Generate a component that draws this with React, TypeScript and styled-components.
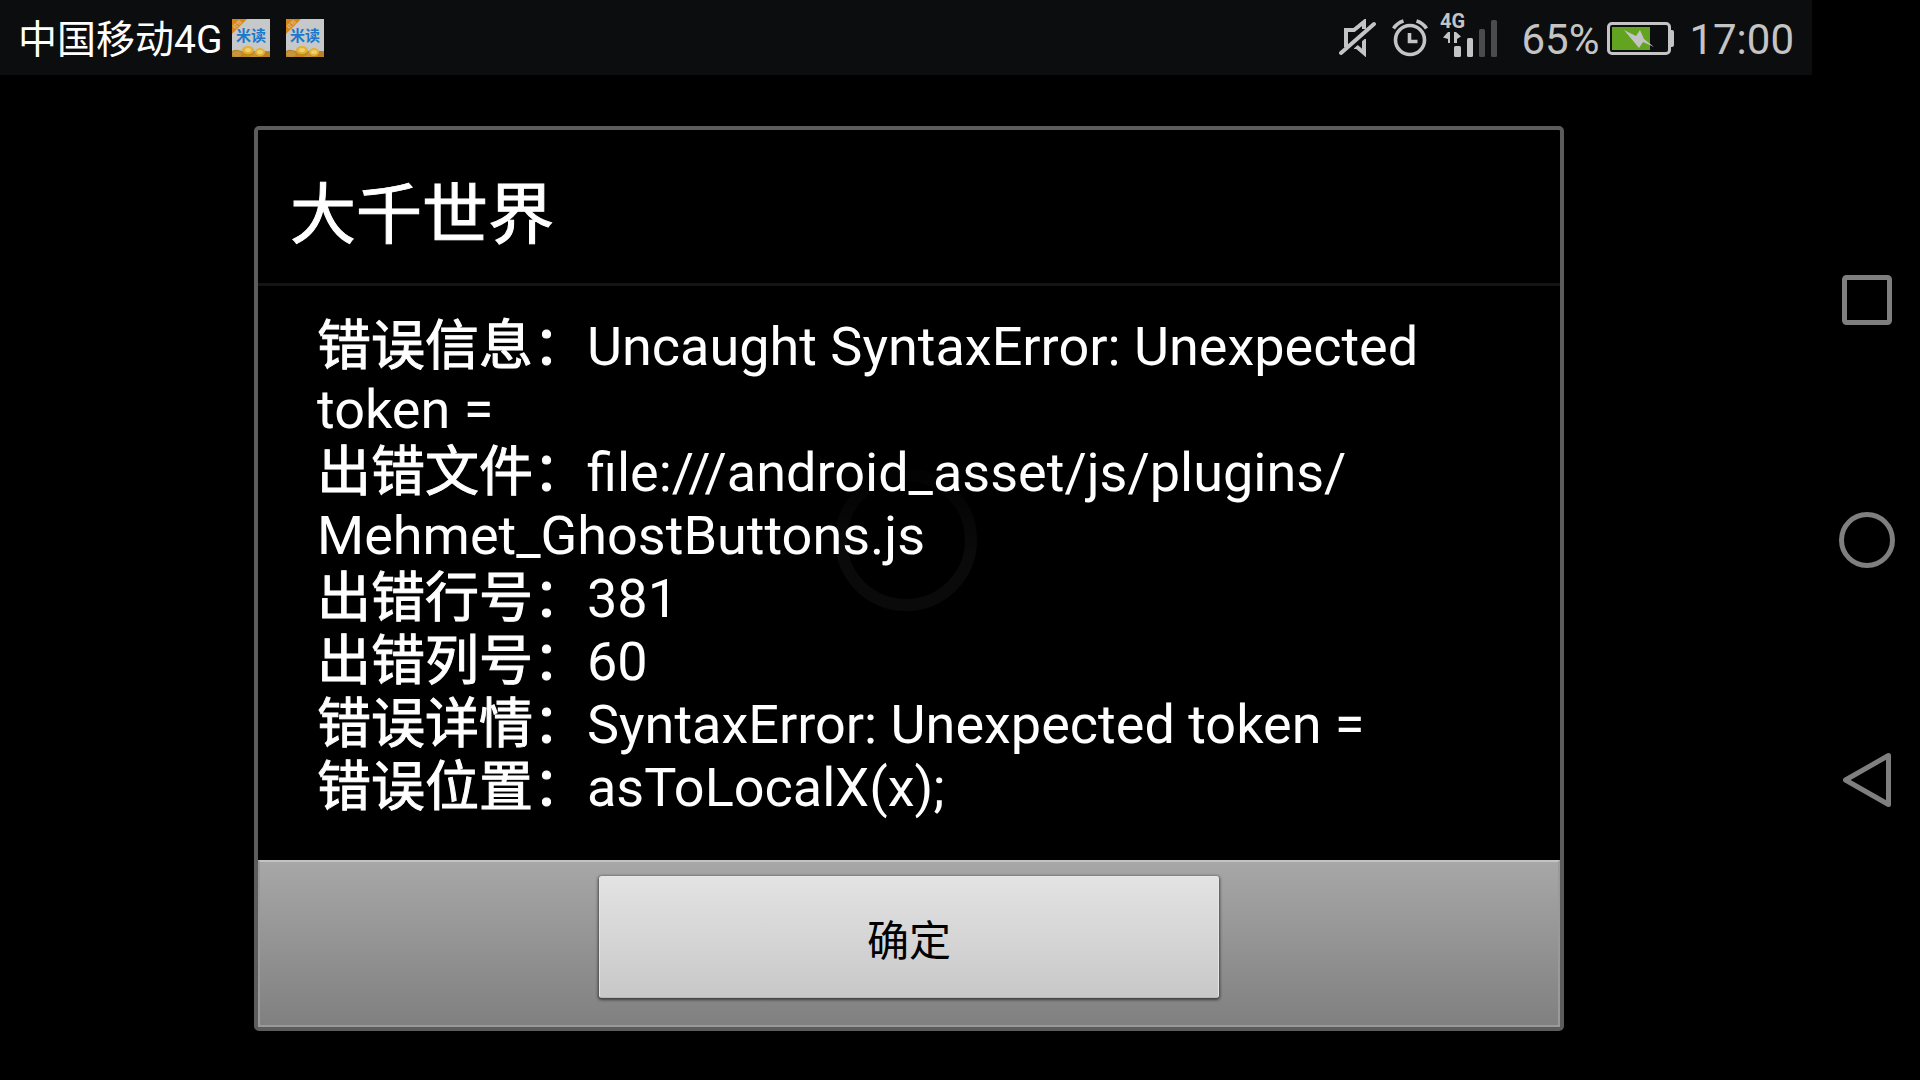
import React, { Fragment } from "react";
import styled, { createGlobalStyle } from "styled-components";

const GlobalStyle = createGlobalStyle`
  * { box-sizing: border-box; }
  body {
    margin: 0;
    background: #000;
    color: #fff;
    font-family: Roboto, "Noto Sans CJK SC", sans-serif;
  }
`;

const Screen = styled.div`
  display: flex;
  min-height: 100vh;
  background: #000;
`;

const Main = styled.div`
  flex: 1;
  min-width: 0;
  display: flex;
  flex-direction: column;
`;

const StatusBar = styled.header`
  display: flex;
  align-items: center;
  justify-content: space-between;
  height: 75px;
  padding: 0 18px;
  background: #0c0d0f;
  white-space: nowrap;
`;

const StatusGroup = styled.div<{ $gap: number }>`
  display: flex;
  align-items: center;
  gap: ${(p) => p.$gap}px;
`;

const Carrier = styled.span`
  padding-top: 4px;
  font-size: 39px;
  line-height: 48px;
`;

const StatusText = styled.span`
  padding-top: 4px;
  font-size: 42px;
  line-height: 48px;
  color: #c4c4c4;
`;

const StatusIcon = styled.svg`
  display: block;
  flex: none;
`;

const Stage = styled.main`
  position: relative;
  flex: 1;
  display: flex;
  justify-content: center;
  align-items: flex-start;
  padding: 51px 0 48px 6px;
`;

const Dialog = styled.section`
  width: 1310px;
  max-width: 100%;
  border: 4px solid #5c5c5c;
  border-radius: 5px;
  background: #000;
`;

const DialogTitle = styled.h1`
  margin: 0;
  padding: 47px 32px 29px;
  border-bottom: 3px solid #141414;
  font-size: 66px;
  line-height: 77px;
  font-weight: 400;
  -webkit-text-stroke: 1px currentColor;
`;

const DialogBody = styled.div`
  padding: 29px 59px 41px;
  font-size: 54px;
  line-height: 63px;
`;

const ErrorLine = styled.p`
  margin: 0;
  overflow-wrap: break-word;
`;

const ErrorLabel = styled.span`
  -webkit-text-stroke: 1px currentColor;
`;

const DialogFooter = styled.footer`
  display: flex;
  justify-content: center;
  height: 167px;
  padding-top: 14px;
  border: 2px solid #9a9a9a;
  border-top-color: #c4c2c4;
  background: linear-gradient(#a7a7a7, #808080);
`;

const OkButton = styled.button`
  width: 620px;
  height: 122px;
  padding: 0;
  border: 1px solid #e6e6e6;
  border-bottom-color: #b8b8b8;
  border-radius: 3px;
  background: linear-gradient(#e3e3e3, #c8c8c8);
  box-shadow: 0 1px 3px 1px rgba(0, 0, 0, 0.55);
  color: #000;
  font: inherit;
  font-size: 42px;
`;

const Spinner = styled.svg`
  position: absolute;
  left: 50%;
  top: 465px;
  transform: translate(-50%, -50%);
  pointer-events: none;
`;

const NavBar = styled.nav`
  flex: none;
  width: 108px;
  min-height: 100vh;
  padding-left: 2px;
  display: flex;
  flex-direction: column;
  align-items: center;
  justify-content: center;
  gap: 140px;
`;

const NavButton = styled.button`
  width: 100px;
  height: 100px;
  padding: 0;
  border: 0;
  background: none;
  color: #7f7f7f;
`;

const AppLabel = styled.text`
  font-family: "Noto Sans CJK SC", sans-serif;
  font-size: 15px;
  font-weight: 700;
  fill: #1c78ca;
`;

const RibbonLabel = styled.text`
  font-family: "Noto Sans CJK SC", sans-serif;
  font-size: 5px;
  fill: #e8d9bd;
`;

const NetworkLabel = styled.text`
  font-family: Roboto, sans-serif;
  font-size: 20px;
  font-weight: 700;
  fill: #c4c4c4;
`;

const AppIcon = () => (
  <StatusIcon width="38" height="38" viewBox="0 0 38 38" aria-hidden="true">
    <rect width="38" height="38" fill="#c6c8ca" />
    <path d="M0 0H15L0 15Z" fill="#d58614" />
    <RibbonLabel x="5" y="7" textAnchor="middle" transform="rotate(-45 5 5)">红包</RibbonLabel>
    <AppLabel x="4" y="22">米读</AppLabel>
    <path d="M0 32q3-2 6-1l4 1 18 0 4 1 6-1v6H0Z" fill="#b9852c" />
    <ellipse cx="5" cy="35" rx="5" ry="3" fill="#c8953a" />
    <ellipse cx="22" cy="36" rx="5" ry="3" fill="#c8953a" />
    <ellipse cx="34" cy="35" rx="4" ry="3" fill="#b98128" />
    <ellipse cx="16" cy="33" rx="6" ry="5" fill="#c48a1c" />
    <ellipse cx="16" cy="31" rx="6" ry="4" fill="#e3b234" />
    <ellipse cx="16" cy="31" rx="3" ry="2" fill="#f0d070" />
    <ellipse cx="28" cy="34" rx="5" ry="4" fill="#c48a1c" />
    <ellipse cx="28" cy="33" rx="5" ry="4" fill="#e3b234" />
    <ellipse cx="28" cy="33" rx="3" ry="2" fill="#f0d070" />
  </StatusIcon>
);

const MutedIcon = () => (
  <StatusIcon width="37" height="38" viewBox="0 0 37 38" aria-label="静音">
    <path d="M7 28V11H15L25 3V10" fill="none" stroke="#c4c4c4" strokeWidth="4" />
    <path d="M15 28H18L25 34V20" fill="none" stroke="#c4c4c4" strokeWidth="4" />
    <path d="M4 37L38 7" stroke="#0c0d0f" strokeWidth="3" />
    <path d="M2 34L35 5" stroke="#c4c4c4" strokeWidth="4" strokeLinecap="round" />
  </StatusIcon>
);

const AlarmIcon = () => (
  <StatusIcon width="36" height="38" viewBox="0 0 36 38" aria-label="闹钟">
    <g fill="none" stroke="#c4c4c4">
      <circle cx="18" cy="21" r="14.5" strokeWidth="3.6" />
      <path d="M17.5 14V22.5H25.5" strokeWidth="3.6" />
      <path d="M1.5 9.5Q5 4 11.5 2M24.5 2Q31 4 34.5 9.5" strokeWidth="3.6" />
    </g>
  </StatusIcon>
);

const SignalIcon = () => (
  <StatusIcon width="59" height="56" viewBox="0 -8 59 56" aria-label="4G 信号">
    <NetworkLabel x="0" y="10">4G</NetworkLabel>
    <path d="M10 14V25H8V21L3 19.5L8 14ZM14 14H16L21 18.5L17 21V25H14Z" fill="#c4c4c4" />
    <rect x="14" y="28" width="7" height="11" rx="1.5" fill="#c4c4c4" />
    <rect x="27" y="20" width="6" height="19" rx="1.5" fill="#c4c4c4" />
    <rect x="39" y="11" width="6" height="28" rx="1.5" fill="#4b4b4c" />
    <rect x="51" y="2" width="6" height="37" rx="1.5" fill="#4b4b4c" />
  </StatusIcon>
);

const BatteryIcon = () => (
  <StatusIcon width="67" height="35" viewBox="0 -2 67 35" aria-label="充电中">
    <rect x="1.5" y="1.5" width="61" height="30" rx="3.5" fill="none" stroke="#c4c4c4" strokeWidth="3" />
    <path d="M64 8H65Q67 8 67 10V23Q67 25 65 25H64Z" fill="#c4c4c4" />
    <rect x="5" y="5" width="38" height="23" fill="#62a320" />
    <path d="M17 8L29 14L33 8L37 17L47 25L36 20L32 26Z" fill="#c4c4c4" />
  </StatusIcon>
);

const details = [
  { label: "错误信息：", value: "Uncaught SyntaxError: Unexpected token =" },
  { label: "出错文件：", value: "file:///android_asset/js/plugins/Mehmet_GhostButtons.js" },
  { label: "出错行号：", value: "381" },
  { label: "出错列号：", value: "60" },
  { label: "错误详情：", value: "SyntaxError: Unexpected token =" },
  { label: "错误位置：", value: "asToLocalX(x);" },
];

/** Lets a long path wrap after any of its single slashes. */
const Breakable = ({ text }: { text: string }) => (
  <>
    {text.split(/(?<=[^/]\/)(?=[^/])/).map((part, i) => (
      <Fragment key={i}>
        {i > 0 && <wbr />}
        {part}
      </Fragment>
    ))}
  </>
);

export default function App() {
  return (
    <Screen>
      <GlobalStyle />
      <Main>
        <StatusBar>
          <StatusGroup $gap={10}>
            <Carrier>中国移动4G</Carrier>
            <StatusGroup $gap={16}>
              <AppIcon />
              <AppIcon />
            </StatusGroup>
          </StatusGroup>
          <StatusGroup $gap={22}>
            <StatusGroup $gap={12}>
              <StatusGroup $gap={16}>
                <MutedIcon />
                <AlarmIcon />
              </StatusGroup>
              <SignalIcon />
            </StatusGroup>
            <StatusGroup $gap={15}>
              <StatusGroup $gap={8}>
                <StatusText>65%</StatusText>
                <BatteryIcon />
              </StatusGroup>
              <StatusText>17:00</StatusText>
            </StatusGroup>
          </StatusGroup>
        </StatusBar>
        <Stage>
          <Dialog role="alertdialog" aria-labelledby="dialog-title">
            <DialogTitle id="dialog-title">大千世界</DialogTitle>
            <DialogBody>
              {details.map((item) => (
                <ErrorLine key={item.label}>
                  <ErrorLabel>{item.label}</ErrorLabel>
                  <Breakable text={item.value} />
                </ErrorLine>
              ))}
            </DialogBody>
            <DialogFooter>
              <OkButton type="button">确定</OkButton>
            </DialogFooter>
          </Dialog>
          <Spinner width="144" height="144" viewBox="0 0 144 144" aria-hidden="true">
            <defs>
              <linearGradient id="ring" x1="0" y1="0" x2="0" y2="1">
                <stop offset="0" stopColor="#fff" stopOpacity="0.01" />
                <stop offset="0.6" stopColor="#fff" stopOpacity="0.04" />
              </linearGradient>
            </defs>
            <circle cx="72" cy="72" r="65" fill="none" stroke="url(#ring)" strokeWidth="12" />
          </Spinner>
        </Stage>
      </Main>
      <NavBar>
        <NavButton type="button" aria-label="最近任务">
          <svg width="100" height="100" viewBox="0 0 100 100" fill="none" stroke="currentColor" strokeWidth="5">
            <rect x="27.5" y="27.5" width="45" height="45" rx="2" />
          </svg>
        </NavButton>
        <NavButton type="button" aria-label="主屏幕">
          <svg width="100" height="100" viewBox="0 0 100 100" fill="none" stroke="currentColor" strokeWidth="5">
            <circle cx="50" cy="50" r="25.5" />
          </svg>
        </NavButton>
        <NavButton type="button" aria-label="返回">
          <svg width="100" height="100" viewBox="0 0 100 100" fill="none" stroke="currentColor" strokeWidth="5" strokeLinejoin="round">
            <path d="M71.5 25.5V74.5L28.5 50Z" />
          </svg>
        </NavButton>
      </NavBar>
    </Screen>
  );
}
